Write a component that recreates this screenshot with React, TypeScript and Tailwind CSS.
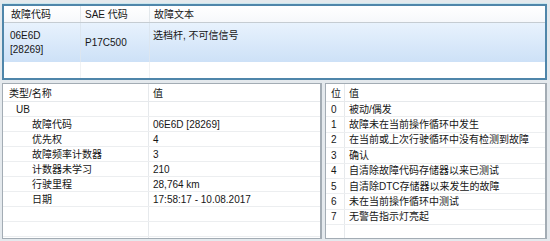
import React from "react";

const font = { fontFamily: '"Liberation Sans", "Noto Sans CJK SC", sans-serif' };

const leftRows: [string, string, number][] = [
  ["UB", "", 1],
  ["故障代码", "06E6D [28269]", 2],
  ["优先权", "4", 2],
  ["故障频率计数器", "3", 2],
  ["计数器未学习", "210", 2],
  ["行驶里程", "28,764 km", 2],
  ["日期", "17:58:17 - 10.08.2017", 2],
  ["", "", 0],
  ["", "", 0],
];

const rightRows: [string, string][] = [
  ["0", "被动/偶发"],
  ["1", "故障未在当前操作循环中发生"],
  ["2", "在当前或上次行驶循环中没有检测到故障"],
  ["3", "确认"],
  ["4", "自清除故障代码存储器以来已测试"],
  ["5", "自清除DTC存储器以来发生的故障"],
  ["6", "未在当前操作循环中测试"],
  ["7", "无警告指示灯亮起"],
  ["", ""],
];

export default function App() {
  return (
    <div
      className="w-[550px] h-[241px] overflow-hidden bg-[#e4e9ed] pt-[3px] pl-[2px] pr-[3px] text-[10px] text-[#161616] flex flex-col"
      style={font}
    >
      <div className="h-px bg-[#c9e6ee]" />
      {/* top panel */}
      <div className="h-[76px] border-2 border-[#4f86aa] bg-white flex flex-col overflow-hidden shrink-0">
        <div className="h-[17px] flex border-b border-[#c5ccd2] bg-gradient-to-b from-white to-[#f6f8fb] shrink-0">
          <div className="w-[77px] pl-[7px] pt-px flex items-center border-r border-[#e3e8ec]">故障代码</div>
          <div className="w-[69px] pl-[4px] pt-px flex items-center border-r border-[#e3e8ec]">SAE 代码</div>
          <div className="flex-1 pl-[4px] pt-px flex items-center">故障文本</div>
        </div>
        <div className="h-[39px] flex bg-gradient-to-b from-[#e8f2fd] to-[#cde1f7] shrink-0">
          <div className="w-[77px] pl-[6px] pt-[6px] leading-[14px] border-r border-[#dce6f0]">
            06E6D
            <br />
            [28269]
          </div>
          <div className="w-[69px] pl-[4px] flex items-center border-r border-[#dce6f0]">P17C500</div>
          <div className="flex-1 pl-[3px] pt-[5px]">选档杆, 不可信信号</div>
        </div>
        <div className="flex-1 flex">
          <div className="w-[77px] border-r border-[#f0f2f4]" />
          <div className="w-[69px] border-r border-[#f0f2f4]" />
          <div className="flex-1" />
        </div>
      </div>
      {/* bottom */}
      <div className="flex gap-[3px] mt-[3px] flex-1 min-h-0">
        <div className="w-[320px] border border-[#a3acb4] border-r-2 bg-white flex flex-col overflow-hidden">
          <div className="h-[18px] flex border-b border-[#e6e9ec] shrink-0">
            <div className="w-[146px] pl-[6px] pt-px flex items-center border-r border-[#e6e9ec]">类型/名称</div>
            <div className="flex-1 pl-[4px] pt-px flex items-center">值</div>
          </div>
          {leftRows.map(([n, v, lvl], i) => (
            <div key={i} className="h-[15px] flex border-b border-[#eceef0] shrink-0">
              <div
                className={
                  "w-[146px] flex items-center border-r border-[#e6e9ec] " +
                  (lvl === 1 ? "pl-[13px]" : "pl-[29px]")
                }
              >
                {n}
              </div>
              <div className="flex-1 pl-[4px] flex items-center">{v}</div>
            </div>
          ))}
          <div className="flex-1 flex">
            <div className="w-[146px] border-r border-[#e6e9ec]" />
          </div>
        </div>
        <div className="flex-1 border border-[#a3acb4] border-r-2 bg-white flex flex-col overflow-hidden">
          <div className="h-[18px] flex border-b border-[#e6e9ec] shrink-0">
            <div className="w-[19px] pl-[5px] pt-px flex items-center border-r border-[#e6e9ec]">位</div>
            <div className="flex-1 pl-[4px] pt-px flex items-center">值</div>
          </div>
          {rightRows.map(([b, v], i) => (
            <div key={i} className="h-[15.4px] flex border-b border-[#eceef0] shrink-0">
              <div className="w-[19px] pl-[5px] flex items-center border-r border-[#e6e9ec]">{b}</div>
              <div className="flex-1 pl-[4px] flex items-center whitespace-nowrap">{v}</div>
            </div>
          ))}
          <div className="flex-1 flex">
            <div className="w-[19px] border-r border-[#e6e9ec]" />
          </div>
        </div>
      </div>
      <div className="h-[2px] shrink-0" />
    </div>
  );
}
